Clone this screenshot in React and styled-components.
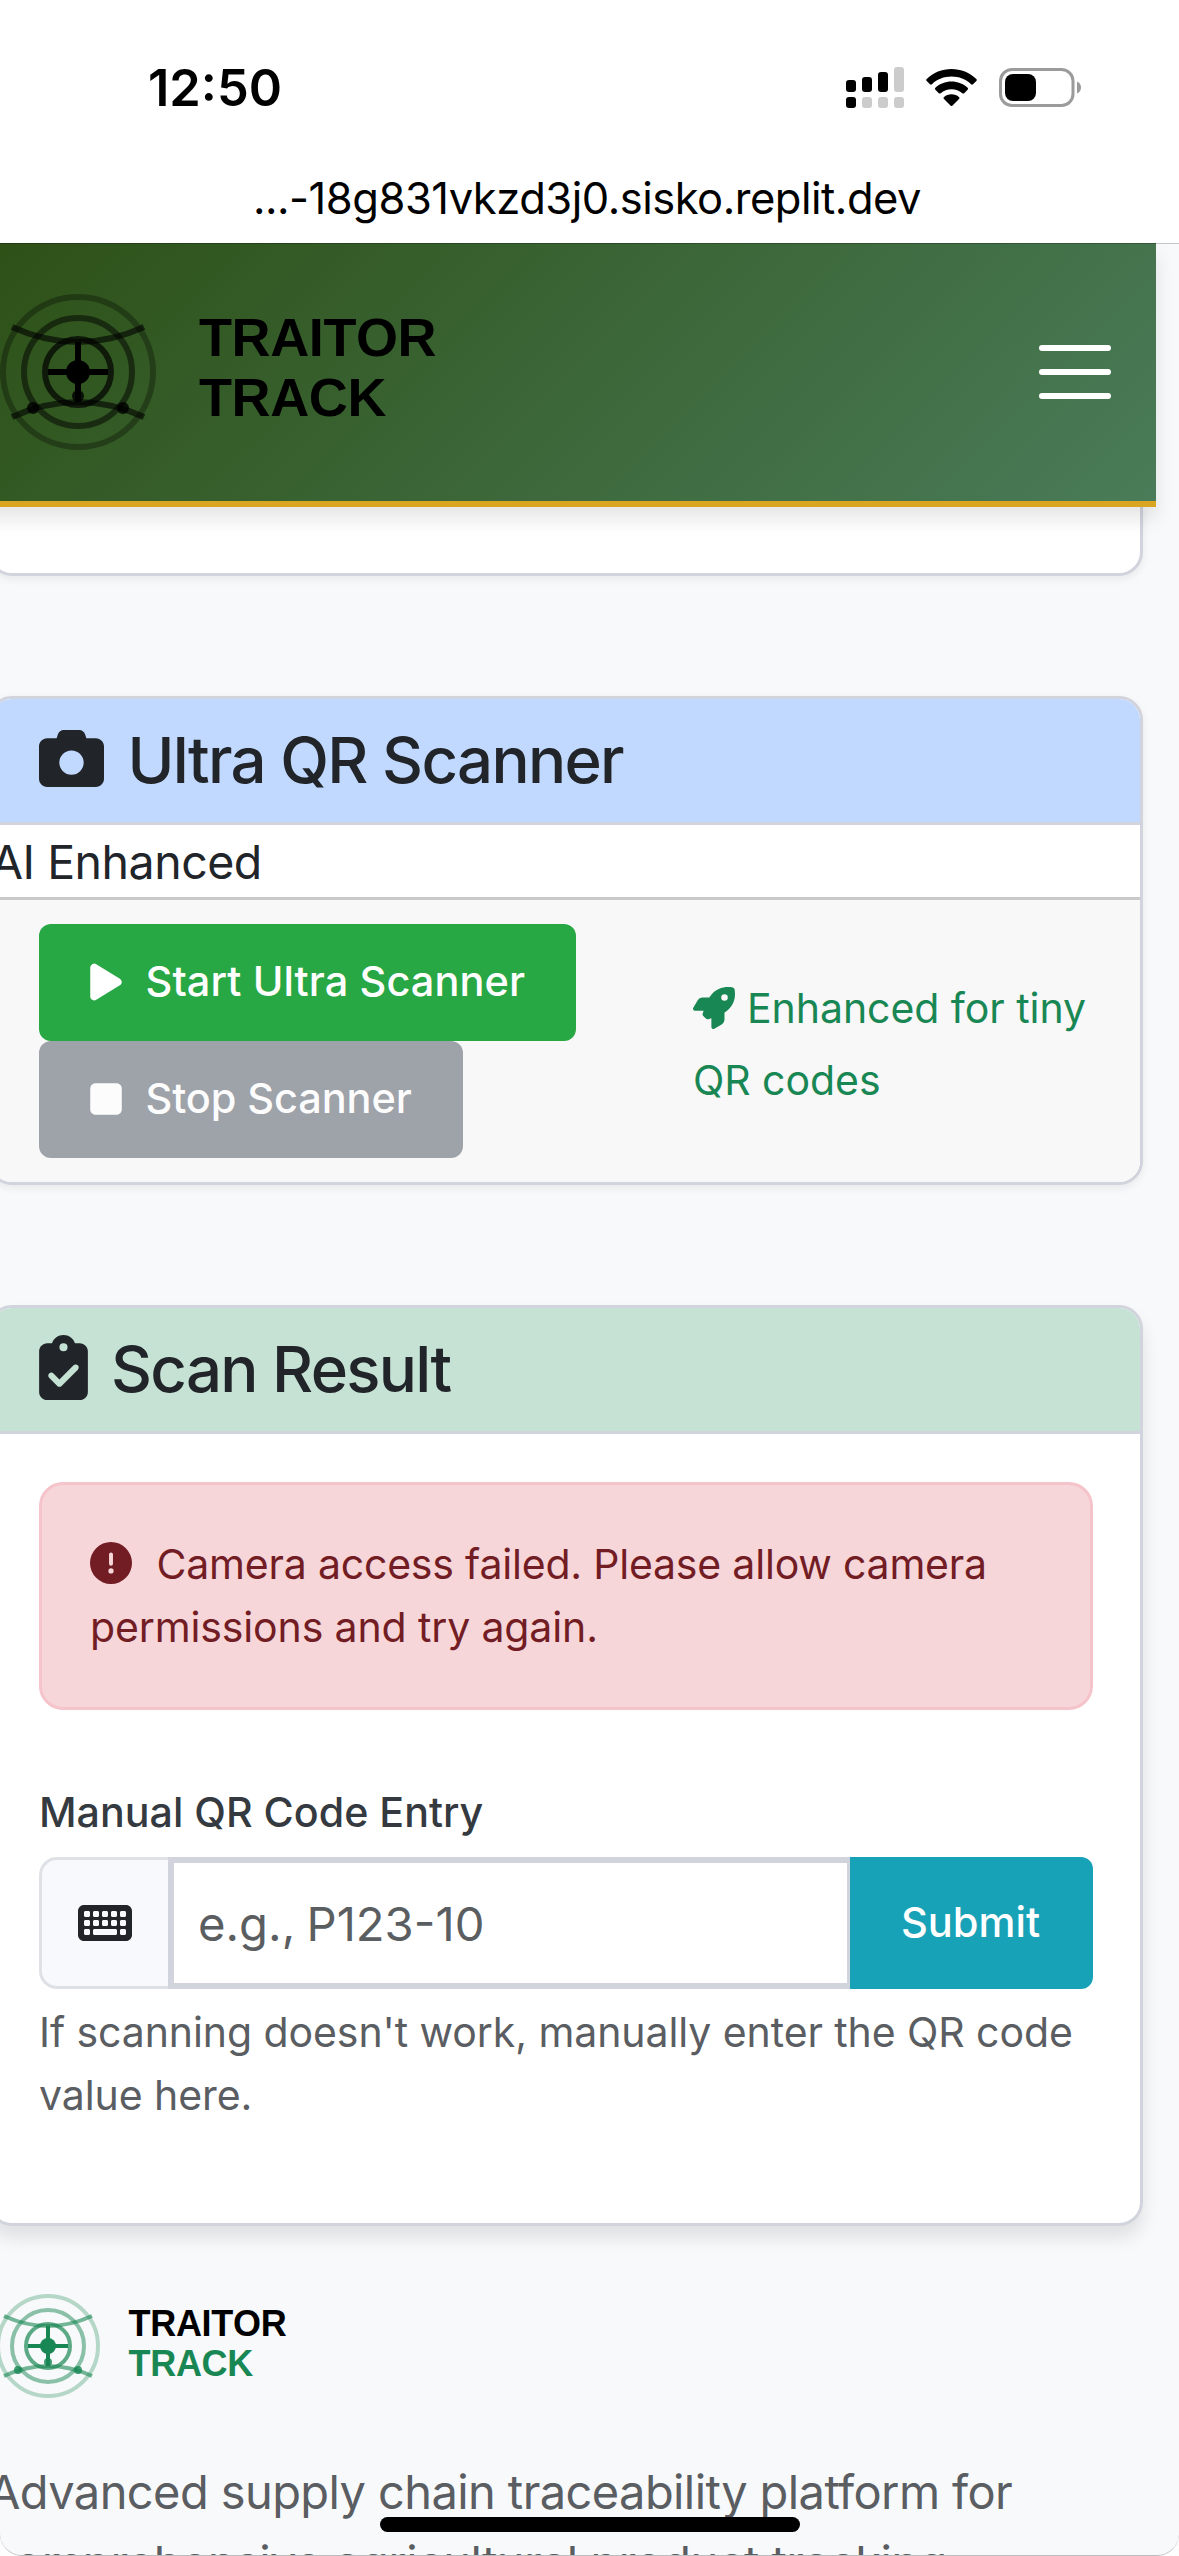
import React from 'react';
import styled, { createGlobalStyle } from 'styled-components';
import {
  FaCamera,
  FaPlay,
  FaStop,
  FaRocket,
  FaClipboardCheck,
  FaCircleExclamation,
  FaKeyboard,
} from 'react-icons/fa6';

const GlobalStyle = createGlobalStyle`
  *, *::before, *::after { box-sizing: border-box; }
  body { margin: 0; background: #fdfdfe; }
  h2, p { margin: 0; }
  svg { display: block; flex: none; }
`;

const Screen = styled.div`
  position: relative;
  width: 1179px;
  height: 2556px;
  overflow: hidden;
  display: flex;
  flex-direction: column;
  background: #fdfdfe;
  color: #212529;
  font-family: Inter, "Liberation Sans", sans-serif;
  -webkit-font-smoothing: antialiased;
`;

const BrowserChrome = styled.div`
  flex: none;
  height: 243px;
  background: #fff;
  color: #000;
`;

const StatusBar = styled.div`
  display: flex;
  justify-content: space-between;
  align-items: center;
  height: 175px;
  padding: 0 97px 0 148px;
`;

const Clock = styled.span`
  font-size: 50.5px;
  font-weight: 600;
  line-height: 60px;
`;

const StatusIcons = styled.div`
  display: flex;
  align-items: center;
  gap: 22px;
`;

const Address = styled.div`
  height: 45px;
  margin-top: 1px;
  padding-right: 5px;
  line-height: 45px;
  font-size: 43.5px;
  text-align: center;
  white-space: nowrap;
  letter-spacing: -0.48px;
`;

const Viewport = styled.div`
  flex: none;
  height: 2313px;
  overflow: hidden;
  background: #f8f9fb;
  box-shadow: inset 0 1px 0 #c3c5c9;
  border-bottom: 1px solid #bcbdbf;
  border-radius: 0 0 22px 22px;
`;

const Page = styled.div`
  width: 1180px;
  margin-left: -24px;
`;

const Navbar = styled.header`
  position: relative;
  z-index: 1;
  display: flex;
  align-items: center;
  justify-content: space-between;
  height: 264px;
  padding: 0 36px 0 24px;
  background: linear-gradient(135deg, #2d5016 0%, #4a7c59 100%);
  border-bottom: 6px solid #daa520;
  box-shadow: 0 12px 18px rgba(0, 0, 0, 0.1), inset 0 1px 0 rgba(0, 0, 0, 0.25);
`;

const Brand = styled.div`
  display: flex;
  align-items: center;
  font-family: "Liberation Sans", Arial, sans-serif;
  font-weight: 700;
  color: #000;
`;

const BrandName = styled.div`
  margin-left: ${(p) => p.$gap}px;
  padding-bottom: ${(p) => p.$lift}px;
  font-size: ${(p) => p.$size}px;
  line-height: ${(p) => p.$line}px;
  letter-spacing: ${(p) => p.$track}px;
  font-kerning: none;
`;

const BrandLine = styled.div`
  color: ${(p) => p.$color || 'inherit'};
`;

const Content = styled.main`
  display: flex;
  flex-direction: column;
  gap: 120px;
  padding: 0 13px 0 12px;
`;

const Card = styled.section`
  overflow: hidden;
  background: #fff;
  border: 3px solid #d1d4dc;
  border-radius: 24px;
  box-shadow: ${(p) =>
    p.$raised ? '0 12px 18px rgba(0, 0, 0, 0.1)' : '0 3px 9px rgba(0, 0, 0, 0.07)'};
`;

const ClippedCard = styled(Card)`
  height: 69px;
  border-top: 0;
  border-radius: 0 0 24px 24px;
`;

const CardHeader = styled.div`
  display: flex;
  align-items: center;
  height: 126px;
  padding: 0 48px;
  background: ${(p) => p.$bg};
  border-bottom: 3px solid #d1d4dc;

  svg {
    width: ${(p) => p.$icon}px;
    height: 65px;
    margin-bottom: 4px;
  }
`;

const CardTitle = styled.h2`
  margin: 0 0 2px ${(p) => p.$gap}px;
  font-size: 63.5px;
  font-weight: 500;
  line-height: 76px;
  white-space: nowrap;
  letter-spacing: -1.68px;
`;

const Tagline = styled.div`
  height: 72px;
  font-size: 46.5px;
  line-height: 74px;
  letter-spacing: -0.5px;
`;

const CardFooter = styled.div`
  display: flex;
  justify-content: space-between;
  align-items: center;
  height: 285px;
  padding: 24px 48px;
  background: #f8f8f8;
  border-top: 3px solid #c9c9ca;
`;

const Actions = styled.div`
  display: flex;
  flex-direction: column;
  align-items: flex-start;
`;

const ActionButton = styled.button`
  display: flex;
  align-items: center;
  gap: 23.5px;
  width: ${(p) => p.$width}px;
  height: 117px;
  padding: 0 0 3px 51px;
  border: 0;
  border-radius: 12px;
  background: ${(p) => p.$bg};
  color: ${(p) => p.$fg};
  font-family: inherit;
  font-size: 41.5px;
  font-weight: 500;
  white-space: nowrap;
  letter-spacing: ${(p) => p.$track}px;

  svg {
    width: 32px;
    height: 42px;
    margin-top: 2px;
  }
`;

const Hint = styled.div`
  width: 399px;
  padding-top: 6px;
  color: #198754;
  font-size: 41px;
  line-height: 72px;
`;

const HintRow = styled.div`
  display: flex;
  align-items: center;
  gap: 12px;
  white-space: nowrap;
  letter-spacing: -0.05px;
`;

const CardBody = styled.div`
  height: 789px;
  padding: 48px 47px 0 48px;
`;

const Alert = styled.div`
  height: 228px;
  padding: 48px;
  border: 3px solid #f5c4ca;
  border-radius: 24px;
  background: #f7d6da;
  color: #721c24;
  font-size: 41px;
  line-height: 63px;
`;

const AlertRow = styled.div`
  display: flex;
  align-items: center;
  gap: 24.5px;
  height: 63px;
  white-space: nowrap;
  letter-spacing: ${(p) => p.$track}px;

  svg { margin-bottom: 4px; }
`;

const FieldLabel = styled.label`
  display: block;
  margin: 71px 0 13px;
  color: #343a40;
  font-size: 41.2px;
  font-weight: 500;
  line-height: 63px;
`;

const InputGroup = styled.div`
  display: flex;
  height: 132px;
`;

const Addon = styled.span`
  display: flex;
  align-items: center;
  justify-content: center;
  width: 129px;
  border: 3px solid #dee2e6;
  border-right: 0;
  border-radius: 18px 0 0 18px;
  background: #f8f9fc;

  svg {
    width: 54px;
    height: 48px;
  }
`;

const TextInput = styled.input`
  flex: 1;
  min-width: 0;
  padding: 0 0 0 24px;
  border: 6px solid #d1d4dc;
  border-right-width: 3px;
  border-radius: 0;
  outline: 0;
  background: #fff;
  font-family: inherit;
  font-size: 47.2px;
  word-spacing: -2px;

  &::placeholder { color: #5b5e61; opacity: 1; }
`;

const SubmitButton = styled.button`
  width: 243px;
  padding: 0 2px 2px 0;
  border: 0;
  border-radius: 0 12px 12px 0;
  background: #18a2b8;
  color: #fff;
  font-family: inherit;
  font-size: 41.6px;
  font-weight: 500;
`;

const HelpText = styled.p`
  margin-top: 12px;
  color: #5a5d61;
  font-size: 41px;
  line-height: 63px;
  white-space: nowrap;
  letter-spacing: -0.08px;
`;

const Footer = styled.footer`
  padding: 68px 0 0 20px;
`;

const FooterText = styled.p`
  margin: 58px 0 0 -8px;
  color: #5a5d61;
  font-size: 47px;
  line-height: 71px;
  white-space: nowrap;
  letter-spacing: -0.59px;
`;

const HomeIndicator = styled.div`
  position: absolute;
  left: 380px;
  bottom: 24px;
  width: 420px;
  height: 15px;
  border-radius: 8px;
  background: #000;
`;

function Emblem({ size, color }) {
  return (
    <svg width={size} height={size} viewBox="-26 -26 52 52" fill="none" stroke={color} strokeWidth="2">
      <circle r="25" opacity="0.3" />
      <circle r="18" opacity="0.5" />
      <circle r="11" opacity="0.7" />
      <path d="M-22 -15Q0 -5 22 -15" opacity="0.6" />
      <path d="M-22 15Q0 5 22 15" opacity="0.6" />
      <path d="M-10 0H10M0 -10V10" />
      <circle r="4" fill={color} stroke="none" />
      <g fill={color} stroke="none" opacity="0.8">
        <circle cx="-15" cy="12" r="2" />
        <circle cx="15" cy="12" r="2" />
        <circle cx="0" cy="8" r="2" />
      </g>
    </svg>
  );
}

function SignalIcon() {
  const columns = [
    { x: 0, y: 13, on: true, lower: true },
    { x: 16, y: 10, on: true },
    { x: 32, y: 5, on: true },
    { x: 48, y: 0, on: false },
  ];
  return (
    <svg width="58" height="41" viewBox="0 0 58 41">
      {columns.map((c) => (
        <g key={c.x}>
          <rect x={c.x} y={c.y} width="10" height={25 - c.y} rx="3" fill={c.on ? '#000' : '#ccc'} />
          <rect x={c.x} y="30" width="10" height="11" rx="3" fill={c.lower ? '#000' : '#ccc'} />
        </g>
      ))}
    </svg>
  );
}

function WifiIcon() {
  return (
    <svg width="51" height="37" viewBox="0 0 51 37">
      <path d="M25.5 0C35 0 43.700 3.700 50.300 9.900Q51.300 10.900 50.300 11.900L47 15.200Q46 16.100 45 15.200C39.800 10.300 33 7.600 25.500 7.600S11.200 10.300 6 15.200Q5 16.100 4 15.200L.7 11.900Q-.3 10.900 .7 9.900C7.300 3.700 16 0 25.500 0Z" />
      <path d="M25.500 12.600C31.700 12.600 37.300 14.900 41.600 18.800Q42.700 19.800 41.600 20.800L38.200 24.200Q37.300 25 36.300 24.200C33.300 21.600 29.600 20.200 25.500 20.200S17.700 21.600 14.700 24.200Q13.700 25 12.800 24.200L9.400 20.800Q8.300 19.800 9.400 18.800C13.700 14.900 19.300 12.600 25.500 12.600Z" />
      <path d="M25.500 25.200C28.400 25.200 31 26.200 32.900 27.900Q34 28.900 33 29.900L26.500 36.400Q25.500 37.400 24.500 36.400L18 29.900Q17 28.900 18.100 27.900C20 26.200 22.600 25.200 25.500 25.200Z" />
    </svg>
  );
}

function BatteryIcon() {
  return (
    <svg width="83" height="39" viewBox="0 0 83 39">
      <rect x="1.500" y="1.500" width="72.500" height="36" rx="11.500" fill="none" stroke="#9b9b9b" strokeWidth="3" />
      <rect x="6" y="6" width="31" height="27" rx="8" />
      <path d="M78 13.500C80.500 14.500 82 16.800 82 19.500S80.500 24.500 78 25.500Z" fill="#9b9b9b" />
    </svg>
  );
}

function MenuIcon() {
  return (
    <svg width="90" height="90" viewBox="0 0 30 30" stroke="#fff" strokeWidth="2" strokeLinecap="round">
      <path d="M4 7H26M4 15H26M4 23H26" />
    </svg>
  );
}

export default function App() {
  return (
    <Screen>
      <GlobalStyle />
      <BrowserChrome>
        <StatusBar>
          <Clock>12:50</Clock>
          <StatusIcons>
            <SignalIcon />
            <WifiIcon />
            <BatteryIcon />
          </StatusIcons>
        </StatusBar>
        <Address>...-18g831vkzd3j0.sisko.replit.dev</Address>
      </BrowserChrome>

      <Viewport>
        <Page>
          <Navbar>
            <Brand>
              <Emblem size={156} color="#000" />
              <BrandName $gap={43} $size={54} $line={60} $lift={10} $track={-0.4}>
                <BrandLine>TRAITOR</BrandLine>
                <BrandLine>TRACK</BrandLine>
              </BrandName>
            </Brand>
            <MenuIcon />
          </Navbar>

          <Content>
            <ClippedCard />

            <Card>
              <CardHeader $bg="#c2d9ff" $icon={65}>
                <FaCamera />
                <CardTitle $gap={23.5}>Ultra QR Scanner</CardTitle>
              </CardHeader>
              <Tagline>AI Enhanced</Tagline>
              <CardFooter>
                <Actions>
                  <ActionButton $width={537} $bg="#28a745" $fg="#fff" $track={0.08}>
                    <FaPlay />
                    Start Ultra Scanner
                  </ActionButton>
                  <ActionButton $width={424} $bg="#9ea2a9" $fg="#fcfcfd" $track={-0.1}>
                    <FaStop />
                    Stop Scanner
                  </ActionButton>
                </Actions>
                <Hint>
                  <HintRow>
                    <FaRocket size={42} />
                    Enhanced for tiny
                  </HintRow>
                  <HintRow>QR codes</HintRow>
                </Hint>
              </CardFooter>
            </Card>

            <Card $raised>
              <CardHeader $bg="#c6e2d4" $icon={49}>
                <FaClipboardCheck />
                <CardTitle $gap={23}>Scan Result</CardTitle>
              </CardHeader>
              <CardBody>
                <Alert>
                  <AlertRow $track={-0.2}>
                    <FaCircleExclamation size={42} />
                    Camera access failed. Please allow camera
                  </AlertRow>
                  <AlertRow $track={-0.13}>permissions and try again.</AlertRow>
                </Alert>
                <FieldLabel>Manual QR Code Entry</FieldLabel>
                <InputGroup>
                  <Addon>
                    <FaKeyboard />
                  </Addon>
                  <TextInput placeholder="e.g., P123-10" />
                  <SubmitButton>Submit</SubmitButton>
                </InputGroup>
                <HelpText>
                  If scanning doesn't work, manually enter the QR code
                  <br />
                  value here.
                </HelpText>
              </CardBody>
            </Card>
          </Content>

          <Footer>
            <Brand>
              <Emblem size={104} color="#198754" />
              <BrandName $gap={28.5} $size={36} $line={40} $lift={4} $track={-0.3}>
                <BrandLine>TRAITOR</BrandLine>
                <BrandLine $color="#198754">TRACK</BrandLine>
              </BrandName>
            </Brand>
            <FooterText>
              Advanced supply chain traceability platform for
              <br />
              comprehensive agricultural product tracking
            </FooterText>
          </Footer>
        </Page>
      </Viewport>
      <HomeIndicator />
    </Screen>
  );
}
